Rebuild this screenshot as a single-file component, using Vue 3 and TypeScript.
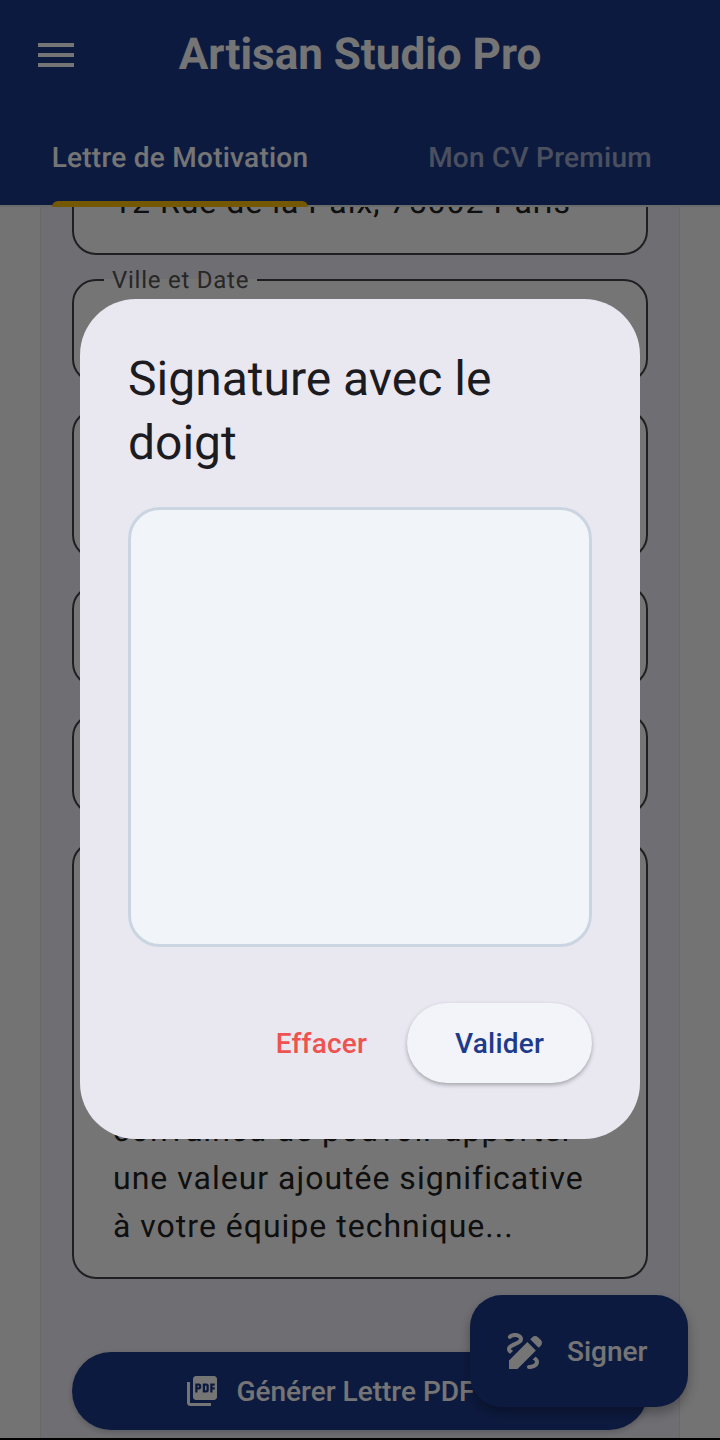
<script setup lang="ts">
const menuPath = 'M3 18h18v-2H3v2zm0-5h18v-2H3v2zm0-7v2h18V6H3z'
const pdfPath =
  'M20 2H8c-1.1 0-2 .9-2 2v12c0 1.1.9 2 2 2h12c1.1 0 2-.9 2-2V4c0-1.1-.9-2-2-2zm-8.5 7.5c0 .83-.67 1.5-1.5 1.5H9v2H7.5V7H10c.83 0 1.5.67 1.5 1.5v1zm5 2c0 .83-.67 1.5-1.5 1.5h-2.5V7H15c.83 0 1.5.67 1.5 1.5v3zm4-3H19v1h1.5V11H19v2h-1.5V7h3v1.5zM9 9.5h1v-1H9v1zM4 6H2v14c0 1.1.9 2 2 2h14v-2H4V6zm10 5.5h1v-3h-1v3z'
const drawPath =
  'M18.85 10.39l1.06-1.06c.78-.78.78-2.05 0-2.83L18.5 5.09c-.78-.78-2.05-.78-2.83 0l-1.06 1.06 4.24 4.24zm-5.66-2.83L4 16.76V21h4.24l9.19-9.19-4.24-4.25zM19 17.5c0 2.19-2.54 3.5-5 3.5-.55 0-1-.45-1-1s.45-1 1-1c1.54 0 3-.73 3-1.5 0-.47-.48-.87-1.23-1.2l1.48-1.48c1.07.63 1.75 1.47 1.75 2.68zM4.58 13.35C3.61 12.79 3 12.06 3 11c0-1.8 1.89-2.63 3.56-3.36C7.59 7.18 9 6.56 9 6c0-.41-.78-1-2-1-1.26 0-1.8.61-1.83.64-.35.41-.98.46-1.4.12-.41-.34-.49-.95-.15-1.38C3.73 4.24 4.76 3 7 3s4 1.32 4 3c0 1.87-1.93 2.72-3.64 3.47C6.42 9.88 5 10.5 5 11c0 .31.43.6 1.07.86l-1.49 1.49z'
</script>

<template>
  <div class="screen">
    <div class="stage">
      <header class="appbar">
        <div class="toolbar">
          <svg class="menu" viewBox="0 0 24 24" aria-hidden="true"><path :d="menuPath" /></svg>
          <h1 class="brand">Artisan Studio Pro</h1>
        </div>
        <nav class="tabs">
          <div class="tab tab--active"><span class="tab-label">Lettre de Motivation</span></div>
          <div class="tab"><span class="tab-label">Mon CV Premium</span></div>
        </nav>
      </header>

      <main class="content">
        <section class="card">
          <fieldset class="field">
            <div class="value">12 Rue de la Paix, 75002 Paris</div>
          </fieldset>
          <fieldset class="field field--city">
            <legend class="label">Ville et Date</legend>
          </fieldset>
          <fieldset class="field field--tall"></fieldset>
          <fieldset class="field field--short"></fieldset>
          <fieldset class="field field--short"></fieldset>
          <fieldset class="field field--letter">
            <div class="value">convaincu de pouvoir apporter une valeur ajoutée significative à votre équipe technique...</div>
          </fieldset>
          <button class="generate" type="button">
            <svg class="pdf" viewBox="0 0 24 24" aria-hidden="true"><path :d="pdfPath" /></svg>
            <span>Générer Lettre PDF</span>
          </button>
        </section>
      </main>

      <button class="fab" type="button">
        <svg class="draw" viewBox="0 0 24 24" aria-hidden="true"><path :d="drawPath" /></svg>
        <span>Signer</span>
      </button>

      <div class="scrim">
        <div class="dialog" role="dialog">
          <h2 class="dialog-title">Signature avec le doigt</h2>
          <div class="pad"></div>
          <div class="actions">
            <button class="clear" type="button">Effacer</button>
            <button class="confirm" type="button">Valider</button>
          </div>
        </div>
      </div>
    </div>
    <div class="navline"></div>
  </div>
</template>

<style>
html,
body {
  margin: 0;
  background: #000;
}
</style>

<style scoped>
.screen {
  width: 720px;
  height: 1440px;
  display: flex;
  flex-direction: column;
  overflow: hidden;
  font-family: Roboto, "Noto Sans", sans-serif;
  text-rendering: geometricPrecision;
}
.stage {
  position: relative;
  flex: 1;
  min-height: 0;
  display: flex;
  flex-direction: column;
  background: #fafafa;
  overflow: hidden;
}
.navline {
  height: 2px;
  background: #000;
}

/* App bar */
.appbar {
  position: relative;
  z-index: 1;
  flex: none;
  background: #1e3a8a;
  color: #fff;
  border-bottom: 2px solid #e5e7eb;
}
.toolbar {
  position: relative;
  box-sizing: border-box;
  height: 110px;
  padding-bottom: 2px;
  display: flex;
  align-items: center;
  justify-content: center;
}
.menu {
  position: absolute;
  left: 32px;
  top: 31px;
  width: 48px;
  height: 48px;
  fill: #fff;
}
.brand {
  margin: 0;
  font-size: 44px;
  line-height: 52px;
  font-weight: 700;
}
.tabs {
  display: flex;
  height: 95px;
}
.tab {
  flex: 1;
  display: flex;
  justify-content: center;
  color: rgba(255, 255, 255, 0.6);
  font-size: 28px;
  font-weight: 500;
  letter-spacing: 0.25px;
}
.tab-label {
  position: relative;
  display: block;
  line-height: 95px;
  height: 95px;
}
.tab--active {
  color: #fff;
}
.tab--active .tab-label::after {
  content: "";
  position: absolute;
  left: 0;
  right: 0;
  bottom: -2px;
  height: 6px;
  background: #ffc107;
  border-radius: 6px 6px 0 0;
}

/* Page behind the dialog */
.content {
  flex: 1;
  min-height: 0;
  display: flex;
  flex-direction: column;
  justify-content: flex-end;
  padding: 0 40px;
}
.card {
  flex: none;
  display: flex;
  flex-direction: column;
  gap: 26px;
  padding: 0 31px 8px;
  background: #f1f1fb;
  border-left: 1px solid #e2e2e8;
  border-right: 1px solid #e2e2e8;
}
.field {
  box-sizing: border-box;
  min-width: 0;
  margin: 0;
  padding: 0 37px 27px 39px;
  background: #fff;
  border: 2px solid #44444c;
  border-radius: 24px;
}
.field--city {
  height: 115px;
  margin-top: -13px;
}
.field--tall {
  height: 150px;
}
.field--short {
  height: 102px;
}
.field--letter {
  height: 438px;
  padding-top: 263px;
}
.label {
  margin-left: -9px;
  padding: 0 8px;
  font-size: 24px;
  line-height: 24px;
  letter-spacing: 0.75px;
  color: #555;
}
.value {
  font-size: 32px;
  line-height: 48px;
  letter-spacing: 1px;
  color: #222;
}
.generate {
  margin-top: 47px;
  height: 78px;
  display: flex;
  align-items: center;
  justify-content: center;
  gap: 16px;
  padding: 0 61px 0 0;
  border: 0;
  border-radius: 39px;
  background: #1e3a8a;
  color: #fff;
  font: 500 28px Roboto, sans-serif;
  box-shadow: 0 2px 6px rgba(0, 0, 0, 0.2);
}
.pdf {
  width: 36px;
  height: 36px;
  fill: #fff;
}

/* Floating action */
.fab {
  position: absolute;
  right: 32px;
  bottom: 31px;
  width: 218px;
  height: 112px;
  display: flex;
  align-items: center;
  gap: 18px;
  padding: 0 0 0 31px;
  box-sizing: border-box;
  border: 0;
  border-radius: 32px;
  background: #1e3a8a;
  color: #fff;
  font: 500 28px Roboto, sans-serif;
  box-shadow: 0 6px 12px rgba(0, 0, 0, 0.3);
}
.draw {
  width: 48px;
  height: 48px;
  fill: #fff;
}

/* Dialog */
.scrim {
  position: absolute;
  inset: 0;
  z-index: 2;
  display: flex;
  align-items: center;
  justify-content: center;
  background: rgba(0, 0, 0, 0.54);
}
.dialog {
  box-sizing: border-box;
  width: 560px;
  padding: 48px 48px 56px;
  background: #e9e8f1;
  border-radius: 56px;
}
.dialog-title {
  margin: 0 0 32px;
  font-size: 48px;
  line-height: 64px;
  font-weight: 400;
  color: #1c1b1f;
}
.pad {
  box-sizing: border-box;
  height: 440px;
  background: #f1f5f9;
  border: 3px solid #cbd5e1;
  border-radius: 32px;
}
.actions {
  display: flex;
  justify-content: flex-end;
  align-items: center;
  gap: 8px;
  margin-top: 56px;
}
.clear,
.confirm {
  height: 80px;
  border: 0;
  font: 500 28px Roboto, sans-serif;
  letter-spacing: 0.2px;
}
.clear {
  padding: 0 32px;
  background: transparent;
  color: #ef5350;
}
.confirm {
  padding: 0 48px;
  border-radius: 40px;
  background: #f3f3fa;
  color: #1e3a8a;
  box-shadow: 0 2px 4px rgba(0, 0, 0, 0.3);
}
</style>
